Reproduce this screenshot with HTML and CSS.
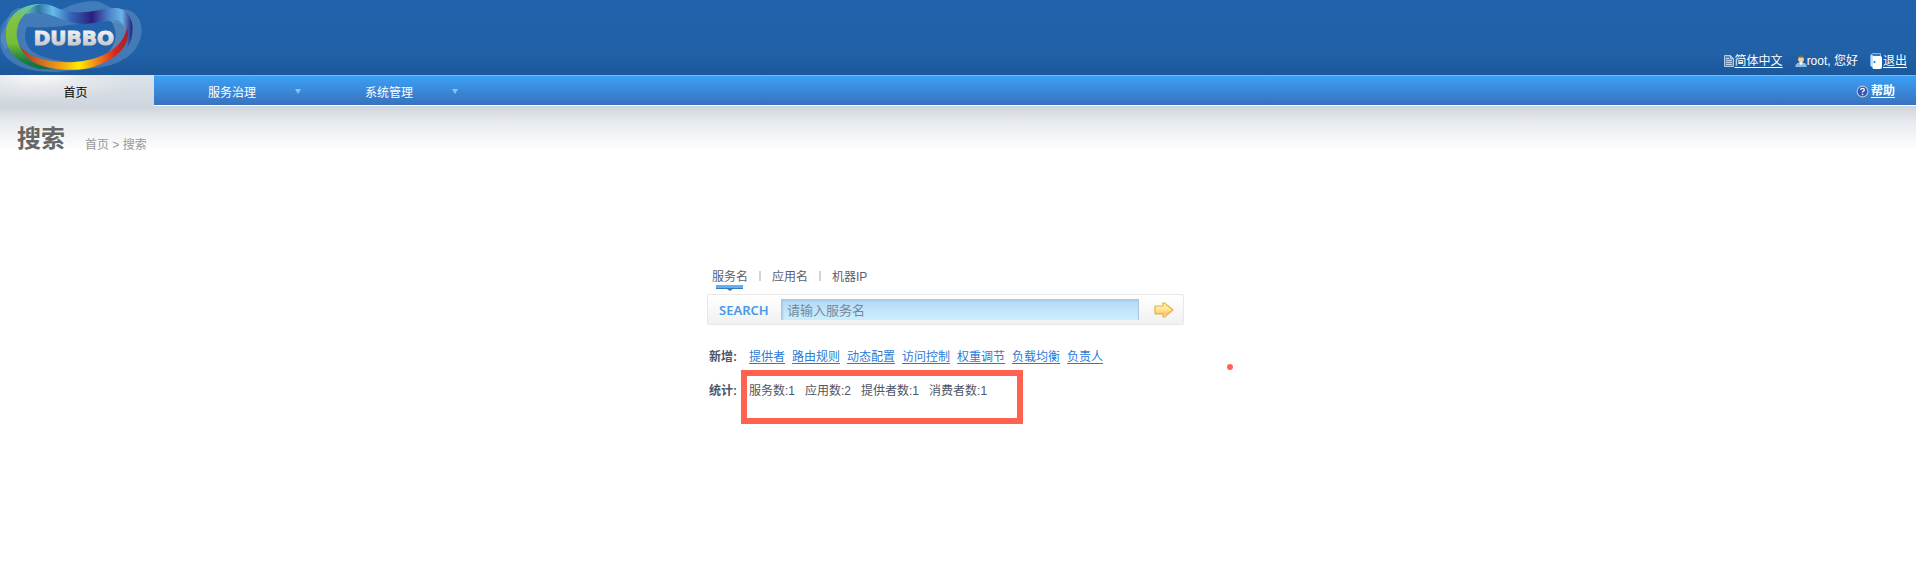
FILE: index.html
```html
<!DOCTYPE html>
<html lang="zh-CN">
<head>
<meta charset="utf-8">
<meta name="viewport" content="width=device-width, initial-scale=1">
<title>Dubbo 搜索</title>
<link rel="stylesheet" href="styles.css">
</head>
<body>
<header class="header">
  <svg class="logo" viewBox="0 0 432 225" role="img" aria-label="Dubbo">
    <defs>
      <linearGradient id="green" x1="0" y1="0" x2="0" y2="1"><stop offset="0" stop-color="#5fc3ba"/><stop offset=".25" stop-color="#80c342"/><stop offset=".6" stop-color="#78bf32"/><stop offset=".85" stop-color="#1d8440"/><stop offset="1" stop-color="#0b6d45"/></linearGradient>
      <linearGradient id="blue"><stop offset="0" stop-color="#6fb6be"/><stop offset=".12" stop-color="#2d78a4"/><stop offset=".25" stop-color="#68bbe9"/><stop offset=".42" stop-color="#3565b7"/><stop offset=".62" stop-color="#2b1f7c"/><stop offset=".78" stop-color="#4a83c9"/><stop offset=".9" stop-color="#6cb4e8"/><stop offset="1" stop-color="#281c70"/></linearGradient>
      <linearGradient id="fire"><stop offset="0" stop-color="#b5302b"/><stop offset=".18" stop-color="#c9662a"/><stop offset=".36" stop-color="#f29a13"/><stop offset=".55" stop-color="#ffed00"/><stop offset=".72" stop-color="#f07f18"/><stop offset=".88" stop-color="#d7281f"/><stop offset="1" stop-color="#a3202b"/></linearGradient>
      <linearGradient id="metal" x1="0" y1="0" x2="0" y2="1"><stop offset="0" stop-color="#ffffff"/><stop offset="1" stop-color="#b9bcc2"/></linearGradient>
    </defs>
    <path d="M55 24C85 22 110 52 165 38C205 18 240 2 285 4C310 6 325 24 350 28C400 20 426 55 425 92C423 137 394 166 370 178C330 207 245 209 180 215C90 222 20 195 3 145C-3 125 2 100 18 75C24 45 35 31 55 24Z" fill="#7fa8d4" opacity=".36"/>
    <path d="M0 90C6 57 30 43 60 49L52 95L18 150C3 132-3 113 0 90Z" fill="#7fa8d4" opacity=".25"/>
    <path d="M82 80C145 88 210 72 255 71C320 59 365 60 380 88C382 118 360 165 285 180C205 196 120 174 92 150C74 128 70 100 82 80Z" fill="#2263ab"/>
    <path d="M330 60C360 60 384 80 382 98C376 130 352 151 318 165C350 133 358 95 330 60Z" fill="#8fb8cf" opacity=".42"/>
    <path d="M132 12C75 8 25 37 18 94C14 145 40 187 115 206L165 208C100 195 55 163 50 105C48 55 85 27 132 12Z" fill="url(#green)"/>
    <path d="M78 43C92 20 112 10 132 12C170 16 185 40 248 37C300 32 320 24 350 24C386 28 401 64 397 95C396 118 389 133 378 148C386 107 377 61 342 60C310 58 287 71 250 72C204 73 175 51 145 43C115 38 94 37 78 43Z" fill="url(#blue)"/>
    <path d="M59 136C85 173 140 187 214 187C300 182 367 149 382 82C395 140 346 179 282 200C228 216 156 211 111 192C83 180 67 158 59 136Z" fill="url(#fire)"/>
    <text class="logo-text" x="101" y="135" fill="url(#metal)" stroke="url(#metal)" stroke-width="3">DUBBO</text>
  </svg>
  <div class="account">
    <a class="item" href="#">
      <svg class="icon" viewBox="0 0 12 14" aria-hidden="true"><path d="M1.500 1.500h6l3 3v8h-9z" fill="#6286bb" stroke="#b4cbe8"/><path d="M7.500 1.500v3h3M3 4.500h3M3 6.500h6M3 8.500h6M3 10.500h6" fill="none" stroke="#bcd2ee"/></svg><span class="link">简体中文</span>
    </a>
    <span class="item">
      <svg class="icon" viewBox="0 0 12 14" aria-hidden="true"><path d="M.5 13v-2Q1 9 4 8.500h4Q11 9 11.500 11v2z" fill="#89bde5"/><path d="M4.500 7h3v3L6 11l-1.500-1z" fill="#f6f4e8"/><circle cx="6" cy="5" r="3" fill="#eed3a2"/><path d="M3 5V3q3-4 6 0v2L8 3.500H4z" fill="#6a6757"/></svg><span>root, 您好</span>
    </span>
    <a class="item" href="#">
      <svg class="icon exit" viewBox="0 0 12 16" aria-hidden="true"><path d="M.5 13V2.500L2 .5h8.500v3" fill="#3977c4" stroke="#75b2ee"/><path d="M1 1.500l2 1v13L1 13z" fill="#c4e3fb"/><path d="M3 3h7q2 0 2 2v9q0 2-2 2H3z" fill="#fff"/><circle cx="4.500" cy="9" r="1" fill="#2061a8"/></svg><span class="link">退出</span>
    </a>
  </div>
</header>
<nav class="nav">
  <a class="tab active" href="#">首页</a>
  <a class="tab menu" href="#">服务治理<span class="caret"></span></a>
  <a class="tab menu" href="#">系统管理<span class="caret"></span></a>
  <a class="help" href="#">
    <svg class="help-icon" viewBox="0 0 14 14" aria-hidden="true"><circle cx="7" cy="7" r="5.800" fill="#3157b9" stroke="#b8c3df" stroke-width="1.200"/><path d="M5 5.300Q5 3.700 7 3.700T9 5.300Q9 6.300 7 7.300V8.200" fill="none" stroke="#fff" stroke-width="1.400"/><path d="M6.300 9.300h1.500v1.500H6.300z" fill="#fff"/></svg><span class="link">帮助</span>
  </a>
</nav>
<div class="heading">
  <h1 class="title">搜索</h1>
  <div class="crumbs">首页 &gt; 搜索</div>
</div>
<div class="content">
<main class="search">
  <div class="kinds">
    <button class="kind selected" type="button">服务名</button>
    <button class="kind" type="button">应用名</button>
    <button class="kind" type="button">机器IP</button>
  </div>
  <form class="bar">
    <label class="bar-label" for="keyword">SEARCH</label>
    <input class="field" id="keyword" type="text" placeholder="请输入服务名">
    <button class="go" type="button" aria-label="搜索">
      <svg class="go-icon" viewBox="0 0 20 16" aria-hidden="true"><defs><linearGradient id="gold" x1="0" y1="0" x2="0" y2="1"><stop offset="0" stop-color="#fffac0"/><stop offset=".5" stop-color="#ffe48a"/><stop offset=".75" stop-color="#ffc081"/><stop offset="1" stop-color="#fff18d"/></linearGradient></defs><path d="M1 4.500Q1 4 1.500 4H9V1h1.500L19 8l-8.500 7H9v-3H1.500Q1 12 1 11.500z" fill="url(#gold)" stroke="#dfb344" stroke-width="1.200"/></svg>
    </button>
  </form>
  <div class="row">
    <strong class="row-label">新增:</strong>
    <div class="links">
      <a href="#">提供者</a><a href="#">路由规则</a><a href="#">动态配置</a><a href="#">访问控制</a><a href="#">权重调节</a><a href="#">负载均衡</a><a href="#">负责人</a>
    </div>
  </div>
  <div class="row stats-row">
    <strong class="row-label">统计:</strong>
    <div class="stats"><span>服务数:1</span><span>应用数:2</span><span>提供者数:1</span><span>消费者数:1</span></div>
    <span class="mark"></span>
    <span class="dot"></span>
  </div>
</main>
</div>
</body>
</html>
```
FILE: styles.css
```css
* { box-sizing: border-box; }
body {
  margin: 0;
  min-height: 100vh;
  background: #fff;
  color: #4d5566;
  font: 12px/18px "Liberation Sans", "Noto Sans CJK SC", sans-serif;
}
h1 { margin: 0; }
button, input { font: inherit; }
button { border: 0; padding: 0; background: none; color: inherit; }
.link { text-decoration: underline; text-underline-offset: 2px; }

.header {
  display: flex;
  justify-content: space-between;
  align-items: flex-end;
  height: 75px;
  background: linear-gradient(#2063ac, #2061a8 70%, #1c5799);
}
.logo { width: 144px; height: 75px; }
.logo-text { font: bold 60px "DejaVu Sans", sans-serif; }
.account { display: flex; gap: 12px; padding: 0 9px 5px 0; color: #fff; }
.item { display: flex; align-items: center; color: #fff; text-decoration: none; }
.icon { width: 12px; height: 14px; }
.exit { height: 16px; margin-right: 1px; }

.nav {
  display: flex;
  height: 31px;
  background: linear-gradient(#3ba0f5, #3872bd);
  border-top: 1px solid #74b5ef;
  border-bottom: 1px solid #fff;
}
.tab {
  display: flex;
  align-items: center;
  justify-content: center;
  width: 157px;
  padding-top: 5px;
  color: #fff;
  text-decoration: none;
}
.active {
  width: 154px;
  margin: -1px 0;
  padding-right: 3px;
  background: radial-gradient(ellipse at 25% 0, #fafbfb, #e4e7eb 30%, transparent 60%), linear-gradient(#dce2e9, #d0d6de);
  color: #000;
}
.menu { justify-content: space-between; padding-left: 54px; padding-right: 10px; }
.caret { border: 3px solid transparent; border-top: 5px solid #83c5fa; border-bottom: 0; margin-bottom: 4px; }
.help { display: flex; align-items: center; gap: 2px; margin-left: auto; padding: 1px 21px 0 0; color: #fff; font-weight: bold; text-decoration: none; }
.help-icon { width: 13px; height: 13px; }

.heading {
  display: flex;
  align-items: flex-end;
  gap: 20px;
  height: 50px;
  padding: 0 17px 2px;
  background: linear-gradient(#ced4dc, #e9ecef 35%, #fff 90%);
}
.title { font-size: 24px; line-height: 30px; color: #666; }
.crumbs { color: #999; }

.content { padding: 110px 25px 0 0; }
.search { width: 477px; margin: 0 auto; }
.kinds { display: flex; padding-left: 5px; }
.kind { height: 28px; padding-bottom: 6px; color: #596173; }
.kind + .kind::before { content: ""; display: inline-block; width: 2px; height: 10px; margin: 0 11px; background: #d2d4dc; }
.selected { position: relative; }
.selected::before {
  content: "";
  position: absolute;
  left: 4px; right: 5px; bottom: 5px;
  height: 3px;
  background: #62aff4;
  border-bottom: 1px solid #347cbc;
}
.selected::after {
  content: "";
  position: absolute;
  left: 15px; bottom: 3px;
  border: 3px solid transparent;
  border-top: 2px solid #347cbc;
  border-bottom: 0;
}
.bar {
  display: flex;
  align-items: center;
  height: 31px;
  border: 1px solid #e8e8e8;
  border-radius: 2px;
  background: linear-gradient(#fff, #f1f1f1);
}
.bar-label { width: 73px; padding-left: 11px; color: #4798e8; font: 600 13px/20px "Noto Sans", sans-serif; }
.field {
  flex: 1;
  min-width: 0;
  height: 21px;
  padding: 1px 5px 0;
  border: 1px solid #a6c8e4;
  border-width: 1px 1px 0;
  background: linear-gradient(#b6d9f6, #ccefff);
  box-shadow: inset 1px 1px 2px #a6cbe9;
  font-size: 13px;
}
.field::placeholder { color: #76899c; opacity: 1; }
.go { display: flex; justify-content: center; width: 44px; padding-left: 6px; }
.go-icon { width: 20px; height: 16px; }
.row { display: flex; gap: 12px; margin-top: 23px; padding-left: 2px; }
.row-label { width: 28px; }
.links { display: flex; gap: 7px; }
.links a { color: #2d7ad6; text-underline-offset: 2px; }
.stats-row { position: relative; margin-top: 16px; }
.stats { display: flex; gap: 10px; }
.mark { position: absolute; left: 34px; top: -12px; width: 282px; height: 54px; border: 6px solid #ff6251; }
.dot { position: absolute; left: 520px; top: -18px; width: 6px; height: 6px; border-radius: 50%; background: #ff6251; }
```
